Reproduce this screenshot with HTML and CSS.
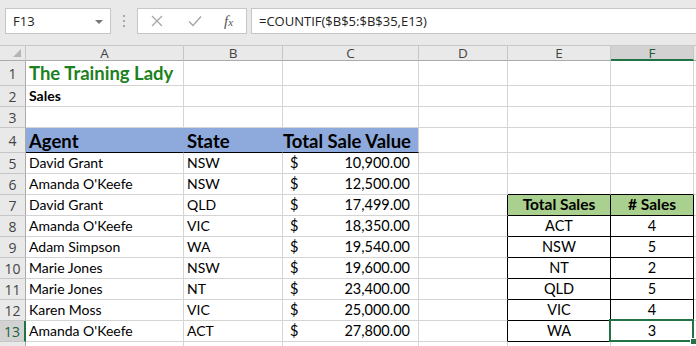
FILE: index.html
```html
<!DOCTYPE html>
<html>
<head>
<meta charset="utf-8">
<link rel="stylesheet" href="styles.css">
</head>
<body>
<div class="toolbar">
  <div class="namebox"><span class="nb-text">F13</span><span class="caret"></span></div>
  <div class="dots"><span></span><span></span><span></span></div>
  <div class="fxbox">
    <svg class="ico" width="12" height="12" viewBox="0 0 12 12"><path d="M1 1L11 11M11 1L1 11" stroke="#a6a6a6" stroke-width="1.3" fill="none"/></svg>
    <svg class="ico chk" width="14" height="12" viewBox="0 0 14 12"><path d="M1 6.5L5 10.5L13 1.5" stroke="#a6a6a6" stroke-width="1.4" fill="none"/></svg>
    <span class="fx">f<span class="fxx">x</span></span>
  </div>
  <div class="formula">=COUNTIF($B$5:$B$35,E13)</div>
</div>
<div class="sheet">
  <div class="c ch corner"><span class="tri"></span></div>
  <div class="c ch">A</div><div class="c ch">B</div><div class="c ch">C</div><div class="c ch">D</div><div class="c ch">E</div><div class="c ch sel">F</div><div class="c ch last"></div>

  <div class="c rh">1</div><div class="c title">The Training Lady</div><div class="c"></div><div class="c"></div><div class="c"></div><div class="c"></div><div class="c"></div><div class="c last"></div>
  <div class="c rh">2</div><div class="c sub">Sales</div><div class="c"></div><div class="c"></div><div class="c"></div><div class="c"></div><div class="c"></div><div class="c last"></div>
  <div class="c rh">3</div><div class="c"></div><div class="c"></div><div class="c"></div><div class="c"></div><div class="c"></div><div class="c"></div><div class="c last"></div>
  <div class="c rh">4</div><div class="c hd">Agent</div><div class="c hd">State</div><div class="c hd hdr">Total Sale Value</div><div class="c"></div><div class="c"></div><div class="c"></div><div class="c last"></div>

  <div class="c rh">5</div><div class="c t">David Grant</div><div class="c t">NSW</div><div class="c money"><span>$</span><span>10,900.00</span></div><div class="c"></div><div class="c"></div><div class="c"></div><div class="c last"></div>
  <div class="c rh">6</div><div class="c t">Amanda O'Keefe</div><div class="c t">NSW</div><div class="c money"><span>$</span><span>12,500.00</span></div><div class="c"></div><div class="c tb-top"></div><div class="c tb-top"></div><div class="c last"></div>
  <div class="c rh">7</div><div class="c t">David Grant</div><div class="c t">QLD</div><div class="c money"><span>$</span><span>17,499.00</span></div><div class="c tb-left"></div><div class="c tb gh">Total Sales</div><div class="c tb gh">&#35; Sales</div><div class="c last"></div>
  <div class="c rh">8</div><div class="c t">Amanda O'Keefe</div><div class="c t">VIC</div><div class="c money"><span>$</span><span>18,350.00</span></div><div class="c tb-left"></div><div class="c tb">ACT</div><div class="c tb">4</div><div class="c last"></div>
  <div class="c rh">9</div><div class="c t">Adam Simpson</div><div class="c t">WA</div><div class="c money"><span>$</span><span>19,540.00</span></div><div class="c tb-left"></div><div class="c tb">NSW</div><div class="c tb">5</div><div class="c last"></div>
  <div class="c rh">10</div><div class="c t">Marie Jones</div><div class="c t">NSW</div><div class="c money"><span>$</span><span>19,600.00</span></div><div class="c tb-left"></div><div class="c tb">NT</div><div class="c tb">2</div><div class="c last"></div>
  <div class="c rh">11</div><div class="c t">Marie Jones</div><div class="c t">NT</div><div class="c money"><span>$</span><span>23,400.00</span></div><div class="c tb-left"></div><div class="c tb">QLD</div><div class="c tb">5</div><div class="c last"></div>
  <div class="c rh">12</div><div class="c t">Karen Moss</div><div class="c t">VIC</div><div class="c money"><span>$</span><span>25,000.00</span></div><div class="c tb-left"></div><div class="c tb">VIC</div><div class="c tb">4</div><div class="c last"></div>
  <div class="c rh rsel">13</div><div class="c t">Amanda O'Keefe</div><div class="c t">ACT</div><div class="c money"><span>$</span><span>27,800.00</span></div><div class="c tb-left"></div><div class="c tb">WA</div><div class="c tb active">3</div><div class="c last"></div>

  <div class="c rh"></div><div class="c"></div><div class="c"></div><div class="c"></div><div class="c"></div><div class="c"></div><div class="c"></div><div class="c last"></div>
</div>
</body>
</html>
```

FILE: styles.css
```css
html, body {
  margin: 0;
  padding: 0;
  background: #ffffff;
}
body {
  width: 696px;
  height: 346px;
  overflow: hidden;
  font-family: Lato, "Open Sans", sans-serif;
}

/* ---------- formula bar ---------- */
.toolbar {
  box-sizing: border-box;
  height: 46px;
  background: #e9e9e9;
  border-bottom: 1px solid #c8c8c8;
  display: flex;
  align-items: flex-start;
  padding-top: 8px;
}
.namebox {
  box-sizing: border-box;
  margin-left: 5px;
  width: 106px;
  height: 26px;
  background: #fff;
  border: 1px solid #c6c6c6;
  display: flex;
  align-items: center;
  justify-content: space-between;
  padding: 0 7px 0 7px;
  font-family: "Open Sans", sans-serif;
  font-size: 13px;
  color: #222;
}
.caret {
  width: 0;
  height: 0;
  border-left: 4px solid transparent;
  border-right: 4px solid transparent;
  border-top: 4px solid #777;
  margin-top: 1px;
}
.dots {
  width: 26px;
  height: 26px;
  display: flex;
  flex-direction: column;
  align-items: center;
  justify-content: center;
  gap: 3px;
}
.dots span {
  width: 2px;
  height: 2px;
  background: #a8a8a8;
}
.fxbox {
  box-sizing: border-box;
  width: 110px;
  height: 26px;
  background: #fff;
  border: 1px solid #c6c6c6;
  display: flex;
  align-items: center;
  padding-left: 13px;
}
.ico { display: block; }
.chk { margin-left: 25px; }
.fx {
  margin-left: 22px;
  font-family: "Liberation Serif", serif;
  font-style: italic;
  font-size: 15px;
  color: #555;
}
.fxx { font-size: 11px; }
.formula {
  box-sizing: border-box;
  margin-left: 4px;
  flex: 1;
  height: 26px;
  background: #fff;
  border: 1px solid #c6c6c6;
  border-right: none;
  display: flex;
  align-items: center;
  padding-left: 7px;
  font-family: "Open Sans", sans-serif;
  font-size: 13px;
  color: #222;
}

/* ---------- sheet grid ---------- */
.sheet {
  display: grid;
  grid-template-columns: 26px 158px 99px 136px 89px 103px 83px 2px;
  grid-template-rows: 15px 25px 21px 21px 25px repeat(9, 21px) 10px;
}
.c {
  box-sizing: border-box;
  border-right: 1px solid #d4d4d4;
  border-bottom: 1px solid #d4d4d4;
  display: flex;
  align-items: flex-end;
  font-size: 14.5px;
  color: #000;
  white-space: nowrap;
  overflow: visible;
  min-width: 0;
}
.c.last { border-right: none; }

.ch {
  background: #e9e9e9;
  border-right-color: #c6c6c6;
  border-bottom-color: #ababab;
  align-items: center;
  justify-content: center;
  font-family: "Open Sans", sans-serif;
  font-size: 13.5px;
  color: #444;
}
.ch.sel {
  background: #d2d2d2;
  border-bottom: 2px solid #217346;
  color: #1e5d38;
}
.corner {
  position: relative;
}
.tri {
  position: absolute;
  right: 4px;
  bottom: 3px;
  width: 0;
  height: 0;
  border-left: 8px solid transparent;
  border-bottom: 8px solid #b5b5b5;
}
.rh {
  background: #e9e9e9;
  border-right-color: #ababab;
  border-bottom-color: #c6c6c6;
  align-items: center;
  justify-content: center;
  font-family: "Open Sans", sans-serif;
  font-size: 14px;
  color: #444;
  padding-top: 1px;
}
.rh.rsel {
  background: #d2d2d2;
  border-right: 2px solid #217346;
  color: #1e5d38;
}

.title {
  font-weight: 700;
  font-size: 18.5px;
  color: #1b8121;
  padding-left: 3px;
  padding-bottom: 1px;
}
.sub {
  font-weight: 700;
  font-size: 14px;
  padding-left: 3px;
  padding-bottom: 2px;
}
.hd {
  background: #8ea9db;
  border-right-color: #8ea9db;
  border-bottom: 1px solid #000;
  font-weight: 700;
  font-size: 18.5px;
  padding-left: 3px;
  padding-bottom: 0;
}
.hd.hdr {
  border-right-color: #d4d4d4;
  justify-content: flex-end;
  padding-right: 7px;
}
.t {
  padding-left: 3px;
  padding-bottom: 2px;
  font-size: 14px;
}
.money {
  justify-content: space-between;
  padding-left: 7px;
  padding-right: 8px;
  padding-bottom: 2px;
}

.tb-top { border-bottom-color: #000; }
.tb-left { border-right-color: #000; }
.tb {
  border-right-color: #000;
  border-bottom-color: #000;
  justify-content: center;
  padding-bottom: 2px;
}
.gh {
  background: #a9d08e;
  font-weight: 700;
  font-size: 15.5px;
}
.active { position: relative; }
.active::before {
  content: "";
  position: absolute;
  left: -2px;
  top: -2px;
  right: -1px;
  bottom: -1px;
  border: 2px solid #217346;
}
.active::after {
  content: "";
  position: absolute;
  right: -4px;
  bottom: -4px;
  width: 5px;
  height: 5px;
  background: #217346;
  border: 1px solid #fff;
}
```
